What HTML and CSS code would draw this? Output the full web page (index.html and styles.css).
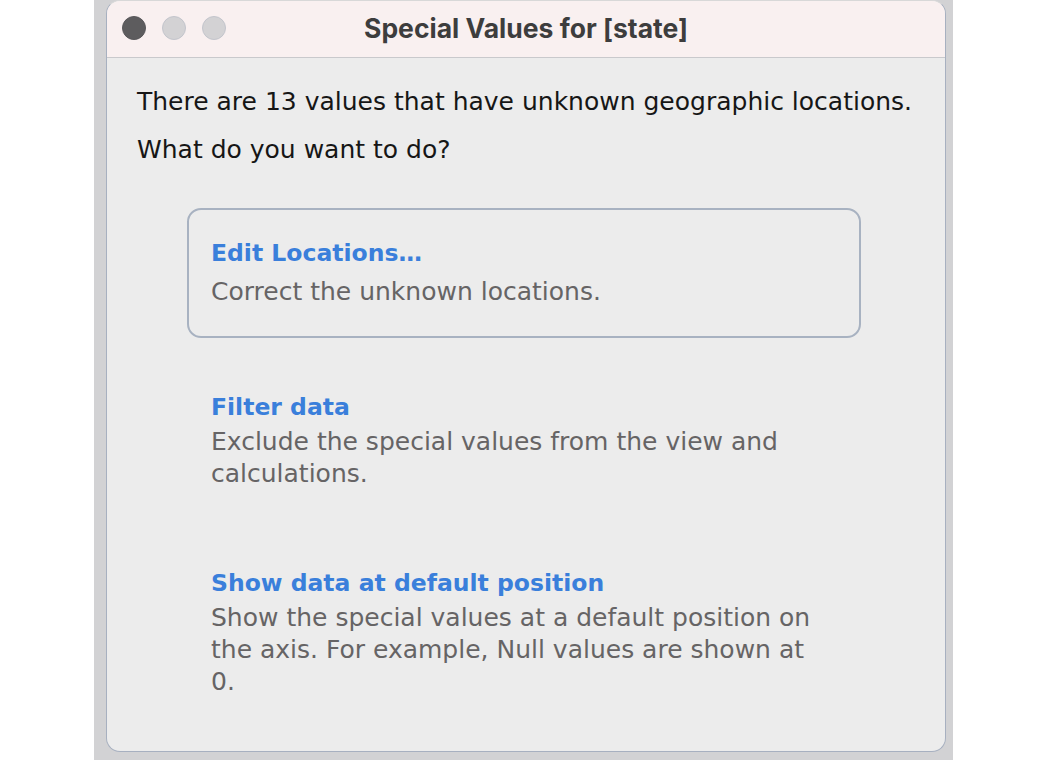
FILE: index.html
```html
<!DOCTYPE html>
<html>
<head>
<meta charset="utf-8">
<link rel="stylesheet" href="styles.css">
</head>
<body>
<div class="backdrop">
  <div class="window">
    <div class="titlebar">
      <div class="lights">
        <span class="light close"></span>
        <span class="light"></span>
        <span class="light"></span>
      </div>
      <div class="title">Special Values for [state]</div>
    </div>
    <div class="content">
      <p class="intro">There are 13 values that have unknown geographic locations.</p>
      <p class="intro">What do you want to do?</p>
      <div class="options">
        <div class="option selected">
          <div class="opt-title">Edit Locations…</div>
          <div class="opt-desc">Correct the unknown locations.</div>
        </div>
        <div class="option filter">
          <div class="opt-title">Filter data</div>
          <div class="opt-desc">Exclude the special values from the view and calculations.</div>
        </div>
        <div class="option show">
          <div class="opt-title">Show data at default position</div>
          <div class="opt-desc">Show the special values at a default position on the axis. For example, Null values are shown at 0.</div>
        </div>
      </div>
    </div>
  </div>
</div>
</body>
</html>
```

FILE: styles.css
```css
html, body {
  margin: 0;
  padding: 0;
  background: #ffffff;
  width: 1048px;
  height: 760px;
  overflow: hidden;
}
.backdrop {
  margin-left: 94px;
  width: 859px;
  height: 760px;
  background: #d2d2d4;
  padding: 0 7px 8px 12px;
  box-sizing: border-box;
}
.window {
  height: 100%;
  box-sizing: border-box;
  border: 1px solid #a7b0c0;
  border-top-color: #d8d8d8;
  border-radius: 14px;
  background: #ececec;
  overflow: hidden;
  display: flex;
  flex-direction: column;
}
.titlebar {
  height: 56px;
  flex: none;
  background: #f9f0f0;
  border-bottom: 1px solid #c9c9cc;
  position: relative;
  display: flex;
  align-items: center;
  justify-content: center;
}
.lights {
  position: absolute;
  left: 15px;
  top: 15px;
  display: flex;
  gap: 16px;
}
.light {
  width: 22px;
  height: 22px;
  border-radius: 50%;
  background: #d3d2d4;
  border: 1px solid #c3c5cc;
}
.light.close {
  background: #5d5c5e;
  border-color: #58575a;
}
.title {
  font-family: "Inter", "Liberation Sans", sans-serif;
  font-weight: 700;
  font-size: 26.5px;
  color: #3d3d3d;
  margin-top: -2px;
}
.content {
  padding: 20px 0 0 30px;
  font-family: "DejaVu Sans", sans-serif;
  font-size: 25px;
}
.intro {
  margin: 0;
  color: #161616;
  line-height: 48px;
}
.options {
  margin-top: 34px;
  margin-left: 50px;
  width: 674px;
  display: flex;
  flex-direction: column;
}
.option {
  padding: 0 22px;
  border: 2px solid transparent;
}
.option.selected {
  border-color: #a8b2c1;
  border-radius: 14px;
  padding: 26px 22px 28px;
}
.option.filter {
  margin-top: 50px;
  width: 610px;
}
.option.show {
  margin-top: 72px;
  width: 610px;
}
.opt-title {
  color: #3a7fdb;
  font-weight: 700;
  font-size: 23.5px;
  line-height: 34px;
}
.selected .opt-desc {
  margin-top: 6px;
}
.opt-desc {
  color: #666465;
  line-height: 32px;
  margin-top: 2px;
}
```
